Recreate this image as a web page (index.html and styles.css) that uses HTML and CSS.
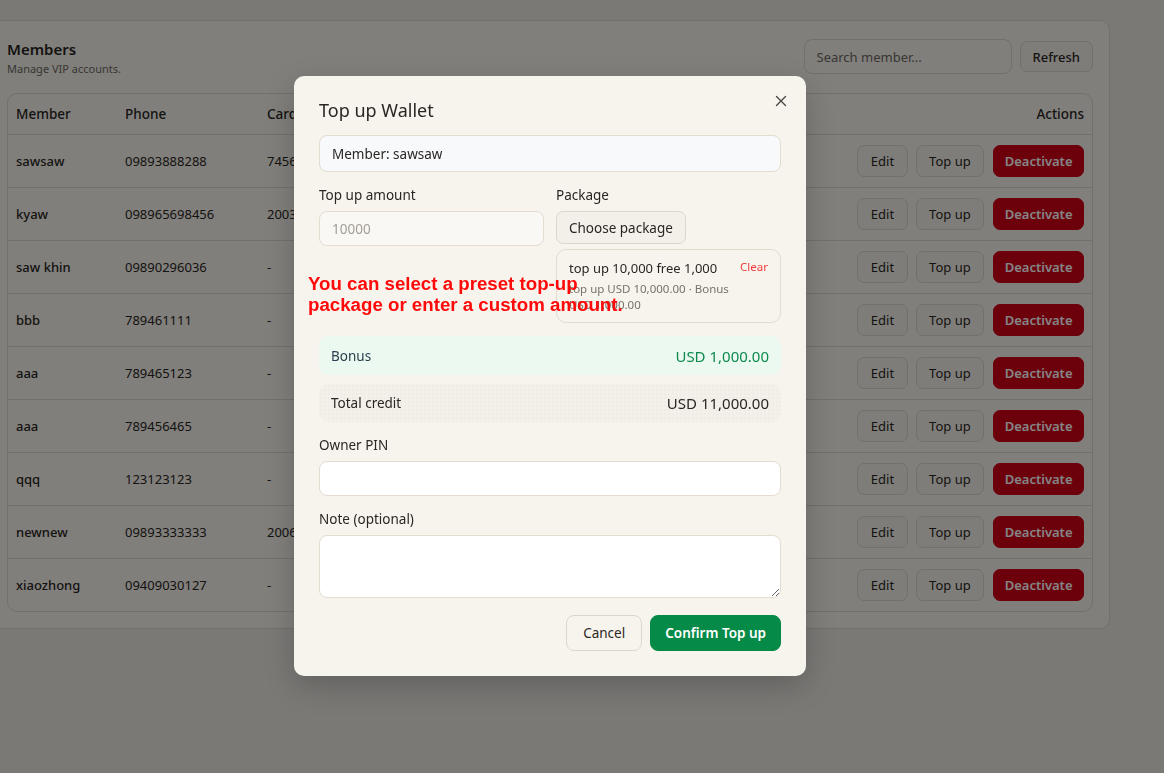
FILE: index.html
```html
<!DOCTYPE html>
<html lang="en">
<head>
<meta charset="utf-8">
<title>Members</title>
<link rel="stylesheet" href="styles.css">
</head>
<body>
<div class="page">
  <section class="card">
    <header class="card-head">
      <div class="titles">
        <h1 class="title">Members</h1>
        <p class="subtitle">Manage VIP accounts.</p>
      </div>
      <div class="tools">
        <input class="search" type="text" placeholder="Search member...">
        <button class="btn btn-light refresh">Refresh</button>
      </div>
    </header>
    <div class="table-wrap">
      <table class="members">
        <colgroup>
          <col class="c-member"><col class="c-phone"><col class="c-card"><col class="c-fill"><col class="c-actions">
        </colgroup>
        <thead>
          <tr><th>Member</th><th>Phone</th><th>Card</th><th></th><th class="ta-r">Actions</th></tr>
        </thead>
        <tbody>
          <tr><td class="name">sawsaw</td><td>09893888288</td><td>7456 1200 0001</td><td></td><td class="acts"><button class="btn btn-light">Edit</button><button class="btn btn-light">Top up</button><button class="btn btn-red">Deactivate</button></td></tr>
          <tr><td class="name">kyaw</td><td>098965698456</td><td>2003 4410 0002</td><td></td><td class="acts"><button class="btn btn-light">Edit</button><button class="btn btn-light">Top up</button><button class="btn btn-red">Deactivate</button></td></tr>
          <tr><td class="name">saw khin</td><td>09890296036</td><td>-</td><td></td><td class="acts"><button class="btn btn-light">Edit</button><button class="btn btn-light">Top up</button><button class="btn btn-red">Deactivate</button></td></tr>
          <tr><td class="name">bbb</td><td>789461111</td><td>-</td><td></td><td class="acts"><button class="btn btn-light">Edit</button><button class="btn btn-light">Top up</button><button class="btn btn-red">Deactivate</button></td></tr>
          <tr><td class="name">aaa</td><td>789465123</td><td>-</td><td></td><td class="acts"><button class="btn btn-light">Edit</button><button class="btn btn-light">Top up</button><button class="btn btn-red">Deactivate</button></td></tr>
          <tr><td class="name">aaa</td><td>789456465</td><td>-</td><td></td><td class="acts"><button class="btn btn-light">Edit</button><button class="btn btn-light">Top up</button><button class="btn btn-red">Deactivate</button></td></tr>
          <tr><td class="name">qqq</td><td>123123123</td><td>-</td><td></td><td class="acts"><button class="btn btn-light">Edit</button><button class="btn btn-light">Top up</button><button class="btn btn-red">Deactivate</button></td></tr>
          <tr><td class="name">newnew</td><td>09893333333</td><td>2006 7781 0003</td><td></td><td class="acts"><button class="btn btn-light">Edit</button><button class="btn btn-light">Top up</button><button class="btn btn-red">Deactivate</button></td></tr>
          <tr><td class="name">xiaozhong</td><td>09409030127</td><td>-</td><td></td><td class="acts"><button class="btn btn-light">Edit</button><button class="btn btn-light">Top up</button><button class="btn btn-red">Deactivate</button></td></tr>
        </tbody>
      </table>
    </div>
  </section>
</div>

<div class="overlay"></div>

<div class="modal" role="dialog" aria-label="Top up Wallet">
  <button class="close" aria-label="Close">
    <svg width="12" height="12" viewBox="0 0 12 12"><path d="M1.5 1.5 L10.5 10.5 M10.5 1.5 L1.5 10.5" stroke="#4a4744" stroke-width="1.4" stroke-linecap="round" fill="none"/></svg>
  </button>
  <h2 class="m-title">Top up Wallet</h2>
  <div class="member-box">Member: sawsaw</div>
  <div class="two-col">
    <div class="field">
      <label class="lbl">Top up amount</label>
      <input class="inp inp-soft" type="text" placeholder="10000">
    </div>
    <div class="field">
      <label class="lbl">Package</label>
      <div><button class="btn btn-light choose">Choose package</button></div>
      <div class="pkg">
        <div class="pkg-top"><span class="pkg-name">top up 10,000 free 1,000</span><span class="pkg-clear">Clear</span></div>
        <div class="pkg-sub">top up USD 10,000.00 · Bonus USD 1,000.00</div>
      </div>
    </div>
  </div>
  <div class="sum sum-bonus"><span>Bonus</span><span class="green">USD 1,000.00</span></div>
  <div class="sum sum-total"><span>Total credit</span><span>USD 11,000.00</span></div>
  <div class="field">
    <label class="lbl">Owner PIN</label>
    <input class="inp" type="password">
  </div>
  <div class="field">
    <label class="lbl">Note (optional)</label>
    <textarea class="inp area"></textarea>
  </div>
  <div class="m-actions">
    <button class="btn btn-light cancel">Cancel</button>
    <button class="btn btn-green">Confirm Top up</button>
  </div>
  <p class="annot">You can select a preset top-up<br>package or enter a custom amount.</p>
</div>
</body>
</html>
```

FILE: styles.css
```css
* { box-sizing: border-box; }
html, body { margin: 0; padding: 0; }
body {
  background: #ebe8e2;
  font-family: "Noto Sans", "Open Sans", sans-serif;
  color: #2a2623;
  width: 1164px;
  height: 773px;
  overflow: hidden;
}
.page { padding-top: 20px; }
.card {
  margin-left: -10px;
  width: 1120px;
  background: #f7f4ee;
  border: 1px solid #ddd6ca;
  border-radius: 10px;
  padding: 18px 16px 16px 16px;
}
.card-head { display: flex; justify-content: space-between; align-items: flex-start; }
.title { margin: 0; font-size: 15px; line-height: 20px; font-weight: 600; color: #2a2623; }
.subtitle { margin: 3px 0 0; font-size: 11px; line-height: 14px; color: #6d6862; }
.tools { display: flex; align-items: center; gap: 8px; }
.search {
  width: 208px; height: 35px; border: 1px solid #ddd6ca; border-radius: 8px;
  background: #f7f4ee; padding: 0 12px; font: 13px "Noto Sans", sans-serif; color: #2a2623;
}
.search::placeholder { color: #6d6862; }
.btn {
  font-family: "Noto Sans", sans-serif; font-size: 13px; border-radius: 7px;
  cursor: pointer; height: 32px; padding: 0 12.5px; white-space: nowrap;
}
.btn-light { background: #f3f0ea; border: 1px solid #ddd6ca; color: #2a2623; }
.btn-red { background: #cf0016; border: 1px solid #cf0016; color: #fff; font-weight: 600; padding: 0 10.5px; }
.btn-green { background: #058a48; border: 1px solid #058a48; color: #fff; font-weight: 600; height: 36px; padding: 0 14px; font-size: 13.5px; border-radius: 8px; }
.refresh { height: 31px; font-weight: 500; padding: 0 12px; }

.table-wrap { margin-top: 17px; border: 1px solid #ddd6ca; border-radius: 10px; overflow: hidden; }
.members { width: 100%; border-collapse: collapse; table-layout: fixed; }
.c-member { width: 109px; } .c-phone { width: 142px; } .c-card { width: 160px; } .c-actions { width: 270px; }
.members th {
  text-align: left; font-size: 13.5px; font-weight: 500; height: 40px; padding: 0 8px;
  border-bottom: 1px solid #ddd6ca; color: #2a2623;
}
.members th.ta-r { text-align: right; }
.members td { height: 53px; padding: 0 8px; font-size: 13px; border-bottom: 1px solid #ddd6ca; color: #2a2623; white-space: nowrap; overflow: hidden; }
.members tbody tr:last-child td { border-bottom: none; }
.members td.name { font-weight: 500; }
.acts { text-align: right; }
.acts .btn { margin-left: 8px; }
.acts .btn-red { margin-left: 9px; }

.overlay { position: fixed; inset: 0; background: rgba(0, 0, 0, 0.48); }

.modal {
  position: absolute; left: 294px; top: 76px; width: 512px; height: 600px;
  background: #f7f4ee; border-radius: 10px; padding: 22px 25px 25px;
  box-shadow: 0 10px 30px rgba(0,0,0,0.2);
}
.close {
  position: absolute; right: 18px; top: 18px; width: 14px; height: 14px; padding: 0;
  background: none; border: none; display: flex; align-items: center; justify-content: center;
}
.m-title { margin: 0; font-size: 18px; line-height: 24px; font-weight: 400; color: #2a2623; }
.member-box {
  margin-top: 13px; height: 37px; border: 1px solid #e3dccf; border-radius: 8px;
  background: #f7f9fb; padding: 0 12px; display: flex; align-items: center; font-size: 13.5px; color: #2a2623;
}
.two-col { display: grid; grid-template-columns: 1fr 1fr; gap: 12px; margin-top: 14px; }
.field { display: flex; flex-direction: column; }
.lbl { font-size: 13.5px; line-height: 18px; color: #2a2623; margin-bottom: 7px; }
.field + .field { margin-top: 14px; }
.two-col .field + .field { margin-top: 0; }
.inp {
  height: 35px; border: 1px solid #e3dccf; border-radius: 8px; background: #fff;
  padding: 0 12px; font: 13.5px "Noto Sans", sans-serif; color: #2a2623;
}
.inp-soft { background: #faf8f4; }
.inp-soft::placeholder { color: #a29d96; }
.area { height: 63px; resize: vertical; }
.choose { height: 33px; font-size: 13.5px; padding: 0 12px; }
.pkg {
  margin-top: 5px; border: 1px solid #e3dccf; border-radius: 10px; padding: 8px 12px 8px;
  height: 74px;
}
.pkg-top { display: flex; justify-content: space-between; align-items: flex-start; }
.pkg-name { font-size: 13px; line-height: 20px; color: #2a2623; }
.pkg-clear { font-size: 11.5px; line-height: 18px; color: #ef3b3b; }
.pkg-sub { font-size: 11.5px; line-height: 16px; color: #77726b; margin-top: 3px; padding-right: 24px; }
.sum {
  display: flex; justify-content: space-between; align-items: center;
  padding: 0 12px; border-radius: 10px; font-size: 13.5px;
}
.sum-bonus { margin-top: 13px; height: 39px; background: #ebf9f1; color: #2b3e4c; }
.sum-bonus .green { color: #0e8a4d; font-size: 15px; }
.sum-total {
  margin-top: 9px; height: 38px; color: #2a2623;
  background-color: #f3f0ea;
  background-image: radial-gradient(#e9e5de 0.6px, transparent 0.8px);
  background-size: 4px 4px;
  margin-bottom: 14px;
}
.sum-total span:last-child { font-size: 15px; }
.m-actions { display: flex; justify-content: flex-end; gap: 8px; margin-top: 17px; }
.cancel { height: 36px; padding: 0 16px; font-size: 13.5px; background: #f7f4ee; border-radius: 8px; }
.annot {
  position: absolute; left: 14px; top: 197px; margin: 0;
  font-family: "Liberation Sans", Arial, sans-serif; font-weight: 700; font-size: 18.7px; line-height: 21px;
  color: #ff0a0a;
}
```
